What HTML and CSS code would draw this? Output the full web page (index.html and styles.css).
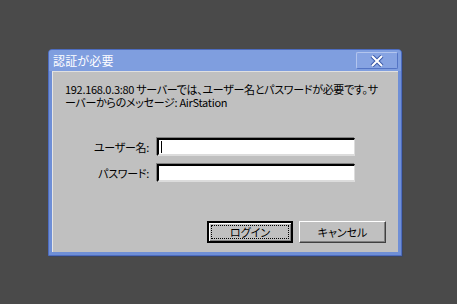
FILE: index.html
```html
<!DOCTYPE html>
<html lang="ja">
<head>
<meta charset="utf-8">
<title>認証が必要</title>
<link rel="stylesheet" href="styles.css">
</head>
<body>
<div class="dialog">
  <div class="titlebar">
    <span class="title">認証が必要</span>
    <button class="close" aria-label="閉じる">
      <svg width="16" height="12" viewBox="0 0 16 12"><path d="M3 1 L13 11 M13 1 L3 11" stroke="#3c5aa8" stroke-width="4" fill="none"/><path d="M3 1 L13 11 M13 1 L3 11" stroke="#ffffff" stroke-width="2" fill="none"/></svg>
    </button>
  </div>
  <div class="content">
    <p class="message">192.168.0.3:80 サーバーでは、ユーザー名とパスワードが必要です。サ<br>ーバーからのメッセージ: AirStation</p>
    <div class="form">
      <label class="label" for="user">ユーザー名:</label>
      <div class="input focused" id="user"><span class="caret"></span></div>
      <label class="label" for="pass">パスワード:</label>
      <div class="input" id="pass"></div>
    </div>
    <div class="buttons">
      <button class="btn default"><span class="focus">ログイン</span></button>
      <button class="btn">キャンセル</button>
    </div>
  </div>
</div>
</body>
</html>
```
FILE: styles.css
```css
html, body {
  margin: 0;
  padding: 0;
  background: #4a4a4a;
  width: 457px;
  height: 304px;
  overflow: hidden;
}
body {
  font-family: "Noto Sans CJK JP", "Liberation Sans", sans-serif;
  font-size: 11px;
  font-feature-settings: "palt";
}
.dialog {
  box-sizing: border-box;
  width: 354px;
  height: 207px;
  margin: 49px 0 0 48px;
  background: #6f8fd6;
  border: 1px solid #4d6cc0;
  border-radius: 4px 4px 0 0;
  padding: 0 3px 3px 3px;
  display: flex;
  flex-direction: column;
  box-shadow: 1px 1px 0 #3b4660;
}
.titlebar {
  height: 21px;
  display: flex;
  align-items: center;
  justify-content: space-between;
  background: #7f9edf;
  margin: 0 -3px;
  padding: 0 3px 0 4px;
  border-radius: 3px 3px 0 0;
}
.title {
  color: #ffffff;
  font-size: 12px;
  line-height: 14px;
  letter-spacing: 0.2px;
}
.close {
  box-sizing: border-box;
  width: 42px;
  height: 17px;
  margin: 0;
  padding: 0;
  background: #86a3e2;
  border: 1px solid #b3c5ee;
  border-right-color: #5474c4;
  border-bottom-color: #5474c4;
  border-radius: 2px;
  display: flex;
  align-items: center;
  justify-content: center;
}
.content {
  flex: 1;
  background: #c0c0c0;
  border-top: 1px solid #e0e0e0;
  border-left: 1px solid #e6e6e6;
  padding: 11px 12px 0 12px;
  display: flex;
  flex-direction: column;
  color: #000;
}
.message {
  margin: 0;
  line-height: 13px;
  font-size: 11px;
  letter-spacing: -0.3px;
  white-space: nowrap;
}
.form {
  margin-top: 29px;
  display: grid;
  grid-template-columns: 92px 198px;
  column-gap: 0;
  row-gap: 8px;
  align-items: center;
}
.label {
  text-align: right;
  padding-right: 8px;
  line-height: 14px;
  letter-spacing: -0.3px;
}
.input {
  box-sizing: border-box;
  height: 18px;
  background: #fff;
  border-top: 2px solid #000;
  border-left: 2px solid #000;
  border-right: 1px solid #dcdcdc;
  border-bottom: 2px solid #dcdcdc;
  box-shadow: -1px -1px 0 #808080;
  position: relative;
}
.caret {
  position: absolute;
  left: 2px;
  top: 1px;
  width: 1px;
  height: 12px;
  background: #000;
}
.buttons {
  margin-top: auto;
  margin-bottom: 9px;
  display: flex;
  justify-content: flex-end;
  gap: 6px;
}
.btn {
  box-sizing: border-box;
  width: 87px;
  height: 22px;
  margin: 0;
  padding: 0;
  font-family: inherit;
  font-size: 11px;
  font-feature-settings: "palt";
  color: #000;
  background: #c0c0c0;
  border: 1px solid;
  border-color: #ffffff #404040 #404040 #ffffff;
  box-shadow: inset -1px -1px 0 #808080;
  display: flex;
  align-items: center;
  justify-content: center;
}
.btn.default {
  width: 86px;
  border: 2px solid #000;
  box-shadow: inset 1px 1px 0 #ffffff, inset -1px -1px 0 #808080;
  padding: 2px;
}
.focus {
  flex: 1;
  align-self: stretch;
  display: flex;
  align-items: center;
  justify-content: center;
  border: 1px dotted #000;
}
```
